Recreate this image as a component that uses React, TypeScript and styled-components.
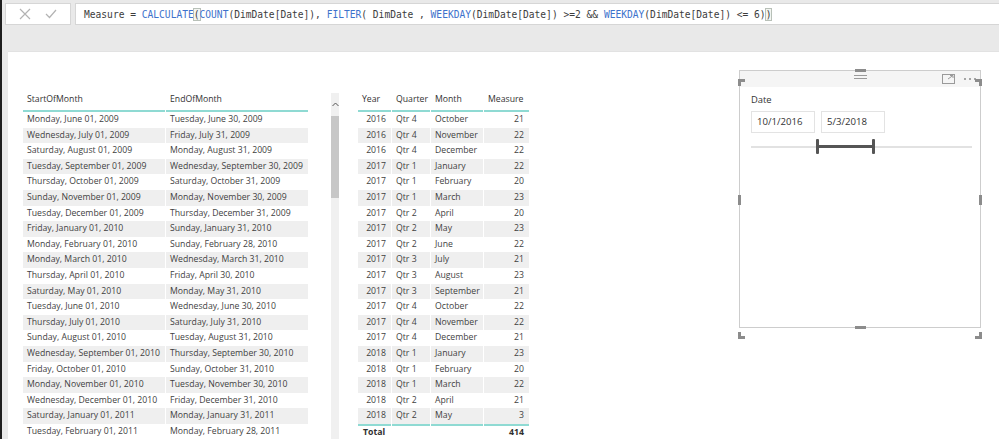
import React from "react";
import styled, { createGlobalStyle } from "styled-components";

const Global = createGlobalStyle`
  html, body { margin: 0; padding: 0; background: #e9e9e9; }
  body { font-family: "Open Sans", "Noto Sans", sans-serif; }
  * { box-sizing: border-box; }
`;

const Frame = styled.div`
  width: 999px;
  height: 439px;
  display: flex;
  overflow: hidden;
  background: #e9e9e9;
`;

const DarkEdge = styled.div`
  width: 2px;
  background: #1e1e1e;
  flex: none;
`;

const Main = styled.div`
  flex: 1;
  display: flex;
  flex-direction: column;
  min-width: 0;
`;

const FormulaBar = styled.div`
  display: flex;
  gap: 4px;
  padding: 3px 0 0 3px;
  height: 25px;
  flex: none;
`;

const ButtonBox = styled.div`
  width: 66px;
  height: 22px;
  background: #fff;
  border: 1px solid #d6d6d6;
  display: flex;
  align-items: center;
  justify-content: space-around;
  padding: 0 6px;
  flex: none;
`;

const FormulaInput = styled.div`
  flex: 1;
  height: 22px;
  background: #fff;
  border: 1px solid #d6d6d6;
  border-right: none;
  padding-left: 8px;
  display: flex;
  align-items: center;
  font-family: "DejaVu Sans Mono", "Liberation Mono", monospace;
  font-size: 9.6px;
  color: #3c3c3c;
  white-space: pre;
  overflow: hidden;
`;

const Kw = styled.span`
  color: #3d72cc;
`;

const Bracket = styled.span`
  outline: 1px solid #b8c0b8;
  background: #f3f5f1;
`;

const Canvas = styled.div`
  flex: 1;
  margin: 26px 0 0 6px;
  background: #fff;
  border-top: 1px solid #e2e2e2;
  display: flex;
  align-items: flex-start;
  padding-left: 15px;
  overflow: hidden;
`;

const TableVisual = styled.div<{ $top: number; $left?: number }>`
  display: flex;
  align-items: flex-start;
  margin-top: ${(p) => p.$top}px;
  margin-left: ${(p) => p.$left ?? 0}px;
  flex: none;
`;

const Grid = styled.div<{ $cols: string }>`
  display: grid;
  grid-template-columns: ${(p) => p.$cols};
  column-gap: 1px;
  font-size: 8.7px;
  color: #3f3f3f;
`;

const HeadCell = styled.div`
  height: 24px;
  line-height: 22px;
  padding: 0 4px;
  border-bottom: 2px solid #8fdad3;
  color: #333;
  white-space: nowrap;
`;

const Cell = styled.div<{ $alt: boolean; $right?: boolean }>`
  height: 15.6px;
  line-height: 15.6px;
  padding: 0 ${(p) => (p.$right ? "5px" : "4px")};
  background: ${(p) => (p.$alt ? "#efefef" : "#fff")};
  text-align: ${(p) => (p.$right ? "right" : "left")};
  white-space: nowrap;
`;

const TotalCell = styled.div<{ $right?: boolean }>`
  height: 16px;
  line-height: 13px;
  border-top: 2px solid #8fdad3;
  padding: 0 5px;
  font-weight: 700;
  color: #2f2f2f;
  text-align: ${(p) => (p.$right ? "right" : "left")};
  white-space: nowrap;
  overflow: visible;
`;

const ScrollTrack = styled.div`
  width: 8px;
  height: 360px;
  margin: 5px 0 0 23px;
  background: #f0f0f0;
  display: flex;
  flex-direction: column;
  align-items: center;
  flex: none;
`;

const ScrollArrow = styled.div`
  height: 23px;
  display: flex;
  align-items: center;
  justify-content: center;
`;

const ScrollThumb = styled.div`
  width: 8px;
  height: 82px;
  background: #c7c7c7;
`;

const Slicer = styled.div`
  position: relative;
  margin: 18px 0 0 210px;
  width: 242px;
  height: 258px;
  border: 1px solid #cdcdcd;
  flex: none;
  display: flex;
  flex-direction: column;
`;

const SlicerHeader = styled.div`
  height: 16px;
  background: #f5f5f5;
  display: flex;
  align-items: center;
  justify-content: flex-end;
  gap: 8px;
  padding-right: 3px;
  position: relative;
`;

const Grip = styled.div`
  position: absolute;
  left: 114px;
  top: 4px;
  width: 13px;
  height: 4px;
  border-top: 1px solid #9a9a9a;
  border-bottom: 1px solid #9a9a9a;
`;

const SlicerBody = styled.div`
  padding: 5px 10px 0 11px;
  display: flex;
  flex-direction: column;
`;

const SlicerTitle = styled.div`
  font-size: 9.4px;
  color: #333;
  height: 19px;
  line-height: 16px;
`;

const DateRow = styled.div`
  display: flex;
  gap: 6px;
`;

const DateBox = styled.div`
  width: 64px;
  height: 22px;
  border: 1px solid #e3e3e3;
  font-size: 9.6px;
  color: #333;
  line-height: 20px;
  padding-left: 5px;
`;

const SliderTrack = styled.div`
  position: relative;
  height: 2px;
  margin-top: 13px;
  width: 221px;
  background: #e2e2e2;
`;

const SliderRange = styled.div`
  position: absolute;
  left: 66px;
  width: 57px;
  top: -1px;
  height: 3px;
  background: #555;
`;

const SliderHandle = styled.div<{ $x: number }>`
  position: absolute;
  left: ${(p) => p.$x}px;
  top: -7px;
  width: 3px;
  height: 15px;
  border-radius: 1px;
  background: #555;
`;

const Handle = styled.div<{ $pos: string }>`
  position: absolute;
  background: #8c8c8c;
  ${(p) => p.$pos}
`;

const Corner = styled.div<{ $pos: string }>`
  position: absolute;
  width: 7px;
  height: 7px;
  ${(p) => p.$pos}
`;

const XIcon = () => (
  <svg width="12" height="12" viewBox="0 0 12 12">
    <path d="M1 1 L11 11 M11 1 L1 11" stroke="#b3b3b3" strokeWidth="1.2" fill="none" />
  </svg>
);

const CheckIcon = () => (
  <svg width="12" height="10" viewBox="0 0 12 10">
    <path d="M1 5 L4.5 8.5 L11 1" stroke="#b3b3b3" strokeWidth="1.2" fill="none" />
  </svg>
);

const FocusIcon = () => (
  <svg width="13" height="10" viewBox="0 0 13 10">
    <rect x="0.5" y="0.5" width="12" height="9" fill="none" stroke="#9a9a9a" />
    <path d="M6 5 L11 1.5 M8 1.5 H11 V4" stroke="#9a9a9a" fill="none" />
  </svg>
);

const MoreIcon = () => (
  <svg width="14" height="4" viewBox="0 0 14 4">
    <circle cx="2" cy="2" r="1" fill="#8a8a8a" />
    <circle cx="7" cy="2" r="1" fill="#8a8a8a" />
    <circle cx="12" cy="2" r="1" fill="#8a8a8a" />
  </svg>
);

const UpArrow = () => (
  <svg width="7" height="5" viewBox="0 0 7 5">
    <path d="M0.5 4 L3.5 1 L6.5 4" stroke="#555" strokeWidth="1" fill="none" />
  </svg>
);

const months: [string, string][] = [
  ["Monday, June 01, 2009", "Tuesday, June 30, 2009"],
  ["Wednesday, July 01, 2009", "Friday, July 31, 2009"],
  ["Saturday, August 01, 2009", "Monday, August 31, 2009"],
  ["Tuesday, September 01, 2009", "Wednesday, September 30, 2009"],
  ["Thursday, October 01, 2009", "Saturday, October 31, 2009"],
  ["Sunday, November 01, 2009", "Monday, November 30, 2009"],
  ["Tuesday, December 01, 2009", "Thursday, December 31, 2009"],
  ["Friday, January 01, 2010", "Sunday, January 31, 2010"],
  ["Monday, February 01, 2010", "Sunday, February 28, 2010"],
  ["Monday, March 01, 2010", "Wednesday, March 31, 2010"],
  ["Thursday, April 01, 2010", "Friday, April 30, 2010"],
  ["Saturday, May 01, 2010", "Monday, May 31, 2010"],
  ["Tuesday, June 01, 2010", "Wednesday, June 30, 2010"],
  ["Thursday, July 01, 2010", "Saturday, July 31, 2010"],
  ["Sunday, August 01, 2010", "Tuesday, August 31, 2010"],
  ["Wednesday, September 01, 2010", "Thursday, September 30, 2010"],
  ["Friday, October 01, 2010", "Sunday, October 31, 2010"],
  ["Monday, November 01, 2010", "Tuesday, November 30, 2010"],
  ["Wednesday, December 01, 2010", "Friday, December 31, 2010"],
  ["Saturday, January 01, 2011", "Monday, January 31, 2011"],
  ["Tuesday, February 01, 2011", "Monday, February 28, 2011"],
];

const measures: [string, string, string, string][] = [
  ["2016", "Qtr 4", "October", "21"],
  ["2016", "Qtr 4", "November", "22"],
  ["2016", "Qtr 4", "December", "22"],
  ["2017", "Qtr 1", "January", "22"],
  ["2017", "Qtr 1", "February", "20"],
  ["2017", "Qtr 1", "March", "23"],
  ["2017", "Qtr 2", "April", "20"],
  ["2017", "Qtr 2", "May", "23"],
  ["2017", "Qtr 2", "June", "22"],
  ["2017", "Qtr 3", "July", "21"],
  ["2017", "Qtr 3", "August", "23"],
  ["2017", "Qtr 3", "September", "21"],
  ["2017", "Qtr 4", "October", "22"],
  ["2017", "Qtr 4", "November", "22"],
  ["2017", "Qtr 4", "December", "21"],
  ["2018", "Qtr 1", "January", "23"],
  ["2018", "Qtr 1", "February", "20"],
  ["2018", "Qtr 1", "March", "22"],
  ["2018", "Qtr 2", "April", "21"],
  ["2018", "Qtr 2", "May", "3"],
];

const cornerSvg = (rot: number) => (
  <svg width="7" height="7" viewBox="0 0 7 7" style={{ transform: `rotate(${rot}deg)` }}>
    <path d="M0 0 H7 V3 H3 V7 H0 Z" fill="#8c8c8c" />
  </svg>
);

export default function App() {
  return (
    <>
      <Global />
      <Frame>
        <DarkEdge />
        <Main>
          <FormulaBar>
            <ButtonBox>
              <XIcon />
              <CheckIcon />
            </ButtonBox>
            <FormulaInput>
              {"Measure = "}
              <Kw>CALCULATE</Kw>
              <Bracket>(</Bracket>
              <Kw>COUNT</Kw>
              {"(DimDate[Date]), "}
              <Kw>FILTER</Kw>
              {"( DimDate , "}
              <Kw>WEEKDAY</Kw>
              {"(DimDate[Date]) >=2 && "}
              <Kw>WEEKDAY</Kw>
              {"(DimDate[Date]) <= 6)"}
              <Bracket>)</Bracket>
            </FormulaInput>
          </FormulaBar>
          <Canvas>
            <TableVisual $top={36}>
              <Grid $cols="142px 142px">
                <HeadCell>StartOfMonth</HeadCell>
                <HeadCell>EndOfMonth</HeadCell>
                {months.map(([a, b], i) => (
                  <React.Fragment key={i}>
                    <Cell $alt={i % 2 === 1}>{a}</Cell>
                    <Cell $alt={i % 2 === 1}>{b}</Cell>
                  </React.Fragment>
                ))}
              </Grid>
              <ScrollTrack>
                <ScrollArrow>
                  <UpArrow />
                </ScrollArrow>
                <ScrollThumb />
              </ScrollTrack>
            </TableVisual>
            <TableVisual $top={36} $left={19}>
              <Grid $cols="33px 38px 52px 45px">
                <HeadCell>Year</HeadCell>
                <HeadCell>Quarter</HeadCell>
                <HeadCell>Month</HeadCell>
                <HeadCell>Measure</HeadCell>
                {measures.map(([y, q, m, v], i) => (
                  <React.Fragment key={i}>
                    <Cell $alt={i % 2 === 1} $right>{y}</Cell>
                    <Cell $alt={i % 2 === 1}>{q}</Cell>
                    <Cell $alt={i % 2 === 1}>{m}</Cell>
                    <Cell $alt={i % 2 === 1} $right>{v}</Cell>
                  </React.Fragment>
                ))}
                <TotalCell>Total</TotalCell>
                <TotalCell />
                <TotalCell />
                <TotalCell $right>414</TotalCell>
              </Grid>
            </TableVisual>
            <Slicer>
              <SlicerHeader>
                <Grip />
                <FocusIcon />
                <MoreIcon />
              </SlicerHeader>
              <SlicerBody>
                <SlicerTitle>Date</SlicerTitle>
                <DateRow>
                  <DateBox>10/1/2016</DateBox>
                  <DateBox>5/3/2018</DateBox>
                </DateRow>
                <SliderTrack>
                  <SliderRange />
                  <SliderHandle $x={65} />
                  <SliderHandle $x={121} />
                </SliderTrack>
              </SlicerBody>
              <Corner $pos="left:-2px;top:-2px;">{cornerSvg(0)}</Corner>
              <Corner $pos="right:-2px;top:-2px;">{cornerSvg(90)}</Corner>
              <Corner $pos="right:-2px;bottom:-2px;">{cornerSvg(180)}</Corner>
              <Corner $pos="left:-2px;bottom:-2px;">{cornerSvg(270)}</Corner>
              <Handle $pos="left:115px;top:-2px;width:11px;height:3px;" />
              <Handle $pos="left:115px;bottom:-2px;width:11px;height:3px;" />
              <Handle $pos="left:-2px;top:124px;width:3px;height:10px;" />
              <Handle $pos="right:-2px;top:124px;width:3px;height:10px;" />
            </Slicer>
          </Canvas>
        </Main>
      </Frame>
    </>
  );
}
